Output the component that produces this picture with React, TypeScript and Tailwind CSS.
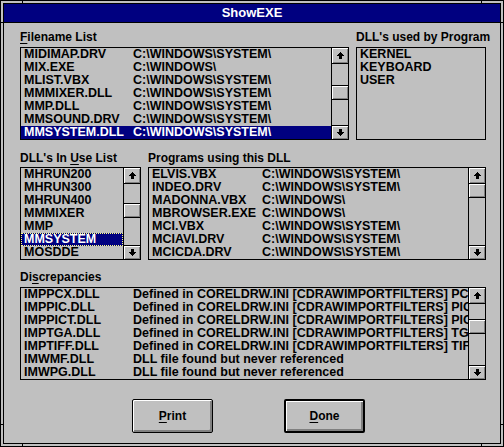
import React from 'react';

type Row = [string, string?];

const FILES: Row[] = [
  ['MIDIMAP.DRV', 'C:\\WINDOWS\\SYSTEM\\'],
  ['MIX.EXE', 'C:\\WINDOWS\\'],
  ['MLIST.VBX', 'C:\\WINDOWS\\SYSTEM\\'],
  ['MMMIXER.DLL', 'C:\\WINDOWS\\SYSTEM\\'],
  ['MMP.DLL', 'C:\\WINDOWS\\SYSTEM\\'],
  ['MMSOUND.DRV', 'C:\\WINDOWS\\SYSTEM\\'],
  ['MMSYSTEM.DLL', 'C:\\WINDOWS\\SYSTEM\\'],
];

const USED = ['KERNEL', 'KEYBOARD', 'USER'];

const IN_USE = ['MHRUN200', 'MHRUN300', 'MHRUN400', 'MMMIXER', 'MMP', 'MMSYSTEM', 'MOSDDE'];

const PROGRAMS: Row[] = [
  ['ELVIS.VBX', 'C:\\WINDOWS\\SYSTEM\\'],
  ['INDEO.DRV', 'C:\\WINDOWS\\SYSTEM\\'],
  ['MADONNA.VBX', 'C:\\WINDOWS\\'],
  ['MBROWSER.EXE', 'C:\\WINDOWS\\'],
  ['MCI.VBX', 'C:\\WINDOWS\\SYSTEM\\'],
  ['MCIAVI.DRV', 'C:\\WINDOWS\\SYSTEM\\'],
  ['MCICDA.DRV', 'C:\\WINDOWS\\SYSTEM\\'],
];

const DISCREPANCIES: Row[] = [
  ['IMPPCX.DLL', 'Defined in CORELDRW.INI [CDRAWIMPORTFILTERS] PCX'],
  ['IMPPIC.DLL', 'Defined in CORELDRW.INI [CDRAWIMPORTFILTERS] PIC'],
  ['IMPPICT.DLL', 'Defined in CORELDRW.INI [CDRAWIMPORTFILTERS] PICT'],
  ['IMPTGA.DLL', 'Defined in CORELDRW.INI [CDRAWIMPORTFILTERS] TGA'],
  ['IMPTIFF.DLL', 'Defined in CORELDRW.INI [CDRAWIMPORTFILTERS] TIFF'],
  ['IMWMF.DLL', 'DLL file found but never referenced'],
  ['IMWPG.DLL', 'DLL file found but never referenced'],
];

function Arrow({ down }: { down?: boolean }) {
  return (
    <svg width="7" height="7" viewBox="0 0 7 7" shapeRendering="crispEdges" className={down ? 'rotate-180' : ''}>
      <rect x="3" y="0" width="1" height="1" fill="#000" />
      <rect x="2" y="1" width="3" height="1" fill="#000" />
      <rect x="1" y="2" width="5" height="1" fill="#000" />
      <rect x="0" y="3" width="7" height="1" fill="#000" />
      <rect x="2" y="4" width="3" height="3" fill="#000" />
    </svg>
  );
}

const bevel = 'bg-[#c0c0c0] shadow-[inset_1px_1px_0_#fff,inset_-1px_-1px_0_#808080]';

function ScrollBar({ thumb }: { thumb: number }) {
  return (
    <div className="w-[17px] shrink-0 border-l border-black flex flex-col">
      <div className={`h-[16px] shrink-0 border-b border-black flex items-center justify-center ${bevel}`}>
        <Arrow />
      </div>
      <div className="flex-1 flex flex-col">
        <div className={`h-[15px] border-y border-black ${bevel}`} style={{ marginTop: thumb }} />
      </div>
      <div className={`h-[14px] shrink-0 border-t border-black flex items-center justify-center ${bevel}`}>
        <Arrow down />
      </div>
    </div>
  );
}

function Item({ row, col, selected, focus }: { row: Row; col: number; selected?: boolean; focus?: boolean }) {
  return (
    <div
      className={`h-[13px] leading-[13px] flex whitespace-nowrap pl-[3px] ${
        selected ? 'bg-[#000080] text-white' : ''
      } ${focus ? 'outline-1 outline-dotted outline-offset-[-1px] outline-[#ffff7f]' : ''}`}
    >
      <span className="shrink-0" style={{ width: row[1] !== undefined ? col : undefined }}>
        {row[0]}
      </span>
      {row[1] !== undefined && <span>{row[1]}</span>}
    </div>
  );
}

function Label({ children }: { children: React.ReactNode }) {
  return <div className="h-[14px] leading-[14px] text-[12px] whitespace-nowrap">{children}</div>;
}

function Button({ children, primary }: { children: React.ReactNode; primary?: boolean }) {
  return (
    <div
      className={`w-[81px] h-[34px] rounded-[2px] border-black ${primary ? 'border-2' : 'border'} bg-[#c0c0c0] shadow-[inset_1px_1px_0_#fff,inset_-2px_-2px_0_#808080] flex items-center justify-center text-[12px]`}
    >
      {children}
    </div>
  );
}

function Tick({ className }: { className: string }) {
  return <div className={`absolute bg-black ${className}`} />;
}

export default function App() {
  return (
    <div className="relative w-[504px] h-[447px] bg-[#c0c0c0] border border-black p-[2px] font-['Liberation_Sans',Arial,sans-serif] font-bold text-black">
      <div className="h-full border border-black flex flex-col">
        <div className="h-[19px] shrink-0 bg-[#000080] border-b border-black text-white text-[13px] leading-[18px] text-center">
          ShowEXE
        </div>

        <div className="flex-1 flex flex-col pl-[16px] pr-[14px] pt-[7px] text-[12.5px]">
          {/* Row 1 */}
          <div className="flex gap-[7px]">
            <div className="w-[329px] flex flex-col gap-[3px]">
              <Label>
                <span className="underline underline-offset-2">F</span>ilename List
              </Label>
              <div className="h-[93px] border border-black flex overflow-hidden">
                <div className="flex-1 overflow-hidden">
                  {FILES.map((r, i) => (
                    <Item key={i} row={r} col={109} selected={i === 6} />
                  ))}
                </div>
                <ScrollBar thumb={21} />
              </div>
            </div>
            <div className="w-[130px] flex flex-col gap-[3px]">
              <Label>DLL's used by Program</Label>
              <div className="h-[93px] border border-black pt-0 overflow-hidden">
                {USED.map((u) => (
                  <div key={u} className="h-[13px] leading-[13px] pl-[3px]">
                    {u}
                  </div>
                ))}
              </div>
            </div>
          </div>

          {/* Row 2 */}
          <div className="flex gap-[7px] mt-[11px]">
            <div className="w-[121px] flex flex-col gap-[2px]">
              <Label>
                DLL's In <span className="underline underline-offset-2">U</span>se List
              </Label>
              <div className="h-[93px] border border-black flex overflow-hidden">
                <div className="flex-1 overflow-hidden">
                  {IN_USE.map((n, i) => (
                    <Item key={n} row={[n]} col={0} selected={i === 5} focus={i === 5} />
                  ))}
                </div>
                <ScrollBar thumb={19} />
              </div>
            </div>
            <div className="w-[338px] flex flex-col gap-[2px]">
              <Label>Programs using this DLL</Label>
              <div className="h-[93px] border border-black flex overflow-hidden">
                <div className="flex-1 overflow-hidden">
                  {PROGRAMS.map((r, i) => (
                    <Item key={i} row={r} col={110} />
                  ))}
                </div>
                <ScrollBar thumb={-1} />
              </div>
            </div>
          </div>

          {/* Row 3 */}
          <div className="flex flex-col gap-[3px] mt-[10px]">
            <Label>
              Di<span className="underline underline-offset-2">s</span>crepancies
            </Label>
            <div className="h-[93px] border border-black flex overflow-hidden">
              <div className="flex-1 overflow-hidden">
                {DISCREPANCIES.map((r, i) => (
                  <Item key={i} row={r} col={109} />
                ))}
              </div>
              <ScrollBar thumb={15} />
            </div>
          </div>

          {/* Buttons */}
          <div className="flex gap-[71px] pl-[112px] mt-[19px]">
            <Button>
              <span className="underline underline-offset-2">P</span>rint
            </Button>
            <Button primary>
              <span className="underline underline-offset-2">D</span>one
            </Button>
          </div>
        </div>
      </div>

      {/* frame resize marks */}
      <Tick className="left-[21px] top-[-1px] w-px h-[4px]" />
      <Tick className="left-[480px] top-[-1px] w-px h-[4px]" />
      <Tick className="left-[21px] top-[442px] w-px h-[4px]" />
      <Tick className="left-[480px] top-[442px] w-px h-[4px]" />
      <Tick className="left-[-1px] top-[21px] w-[4px] h-px" />
      <Tick className="left-[-1px] top-[423px] w-[4px] h-px" />
      <Tick className="left-[499px] top-[21px] w-[4px] h-px" />
      <Tick className="left-[499px] top-[423px] w-[4px] h-px" />
    </div>
  );
}
